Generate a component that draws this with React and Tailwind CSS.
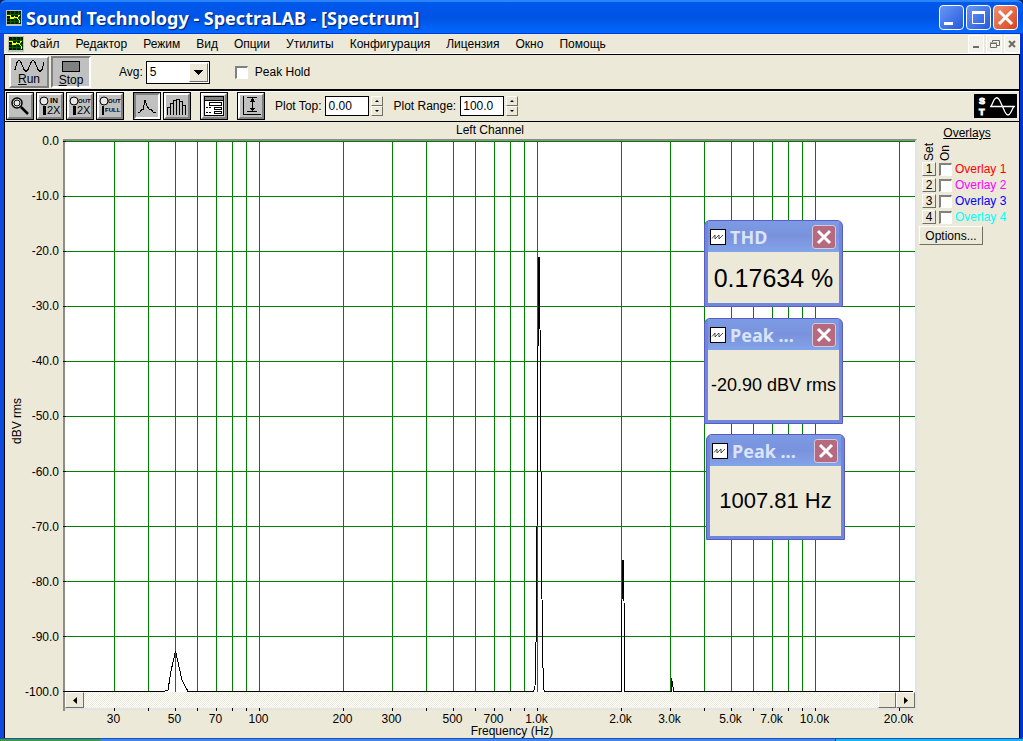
import { useState } from 'react'

const MENU = ['Файл', 'Редактор', 'Режим', 'Вид', 'Опции', 'Утилиты', 'Конфигурация', 'Лицензия', 'Окно', 'Помощь']

const OVERLAYS = [
    { id: 1, color: 'text-[#ff0000]' },
    { id: 2, color: 'text-[#ff00ff]' },
    { id: 3, color: 'text-[#0000ff]' },
    { id: 4, color: 'text-[#00ffff]' },
]

// Plot area units: 850 wide, 551 high, 278 per decade
const PLOT_W = 850
const PLOT_H = 551
const freqX = (hz) => Math.round(194 + 278 * Math.log10(hz / 100)) + 0.5

const FREQS = [
    30, 40, 50, 60, 70, 80, 90, 100, 200, 300, 400, 500, 600, 700, 800, 900,
    1000, 2000, 3000, 4000, 5000, 6000, 7000, 8000, 9000, 10000, 20000,
]
const FREQ_LABELS = [
    [30, '30'], [50, '50'], [70, '70'], [100, '100'], [200, '200'], [300, '300'], [500, '500'], [700, '700'],
    [1000, '1.0k'], [2000, '2.0k'], [3000, '3.0k'], [5000, '5.0k'], [7000, '7.0k'], [10000, '10.0k'], [20000, '20.0k'],
]
const LEVELS = [0, -10, -20, -30, -40, -50, -60, -70, -80, -90, -100]

const SPECTRUM =
    'M0 550.5H99L103 549L106 530L110.5 510L117 539L123 550.5H468.5L470 545L471.5 480L473.5 116L474.5 116L476.5 400L477.5 515L479 549L480 550.5' +
    'H556.5V500L557.5 419H558.5L559.5 500V550.5H606.5V537L608.5 549L609 550.5H848'

const raised = 'border border-t-white border-l-white border-r-[#716f64] border-b-[#716f64] bg-[#ece9d8]'

function AppIcon() {
    return (
        <svg viewBox="0 0 16 16" className="h-4 w-4 shrink-0" shapeRendering="crispEdges" aria-hidden="true">
            <rect width="16" height="16" fill="#c0c0c0" />
            <rect x="1" y="1" width="14" height="13" fill="#001800" />
            <path d="M1 4.5H15M1 8.5H15M1 11.5H15M4.5 1V14M8.5 1V14M12.5 1V14" stroke="#006000" fill="none" />
            <path d="M1 5.5H4L5 8.5L6 7L7 9L8.5 6M8 7.5H11L13 10L14 13M11 8L13.5 5" stroke="#ffff00" fill="none" />
        </svg>
    )
}

function CaptionButton({ label, className, children }) {
    return (
        <button aria-label={label} className={`h-[25px] w-[25px] rounded-[4px] border border-white ${className}`}>
            <svg viewBox="0 0 23 23" className="h-full w-full" fill="none" stroke="white">{children}</svg>
        </button>
    )
}

function TitleBar() {
    return (
        <header className="flex h-[34px] items-center rounded-t-[6px] bg-linear-to-b from-[#0058ee] via-[#0054e3] to-[#0068ff] border-t-2 border-t-[#2a86f8] border-b border-b-[#003dd7] pl-[6px] pr-[5px]">
            <AppIcon />
            <h1 className="ml-1 flex-1 whitespace-nowrap font-['Noto_Sans',sans-serif] text-[18px] font-bold text-white [text-shadow:1px_1px_1px_#001e78]">
                Sound Technology - SpectraLAB - [Spectrum]
            </h1>
            <div className="flex gap-[2px]">
                <CaptionButton label="Minimize" className="bg-linear-to-br from-[#6a96f5] to-[#2258dd]">
                    <path d="M4 17.5H13" strokeWidth="3" />
                </CaptionButton>
                <CaptionButton label="Maximize" className="bg-linear-to-br from-[#6a96f5] to-[#2258dd]">
                    <path d="M5.5 5.5H17.5V17.5H5.5Z" />
                    <path d="M5 6.5H18" strokeWidth="3" />
                </CaptionButton>
                <CaptionButton label="Close" className="bg-linear-to-br from-[#f0906f] to-[#d6401a]">
                    <path d="M5 5L18 18M18 5L5 18" strokeWidth="3" />
                </CaptionButton>
            </div>
        </header>
    )
}

function MenuBar() {
    return (
        <nav className="flex h-5 items-center border-b border-white pl-1">
            <AppIcon />
            <div className="ml-[6px] flex flex-1 gap-4">
                {MENU.map((item) => (
                    <button key={item} className="whitespace-nowrap">{item}</button>
                ))}
            </div>
            <div className="flex gap-[2px]">
                {[
                    ['Minimize document', 'M4 11H10', 2],
                    ['Restore document', 'M3.5 7.5H9.5V11.5H3.5ZM3 7H10M5.5 6V4.5H12.5V9.5H10', 1],
                    ['Close document', 'M4 5L10 11M10 5L4 11', 2],
                ].map(([label, d, w]) => (
                    <button key={label} aria-label={label} className="h-[18px] w-4 border border-white bg-[#f3f2ea]">
                        <svg viewBox="0 0 14 16" className="h-full w-full" fill="none" stroke="#6d6b5f" strokeWidth={w}>
                            <path d={d} />
                        </svg>
                    </button>
                ))}
            </div>
        </nav>
    )
}

function TransportBar() {
    return (
        <div className="flex h-[35px] items-center border-t border-black pl-1">
            <div className="flex gap-[2px]">
                <button className="flex h-8 w-10 flex-col items-center border-2 border-t-white border-l-white border-r-[#808080] border-b-[#808080] bg-[#c0c0c0] leading-3">
                    <svg viewBox="0 0 32 14" className="h-[15px] w-8" fill="none" stroke="black" shapeRendering="crispEdges" aria-hidden="true">
                        <path d="M1 11.5L2 11L4 4L6 1.5L8 4L11 11L13 13L15 11L18 4L20 1.5L22 4L25 11L27 13L29 11L31 4" />
                    </svg>
                    <span><u>R</u>un</span>
                </button>
                <button className="flex h-8 w-10 flex-col items-center border-2 border-t-[#808080] border-l-[#808080] border-r-white border-b-white bg-[#c0c0c0] pt-[3px] leading-3">
                    <span className="mb-[2px] h-[11px] w-[18px] shrink-0 border border-black bg-[#808080]" />
                    <span><u>S</u>top</span>
                </button>
            </div>
            <label htmlFor="avg" className="ml-[28px]">Avg:</label>
            <div className="relative ml-[3px] h-[23px] w-16">
                <select id="avg" defaultValue="5" className="h-full w-full appearance-none rounded-none border border-black bg-white pl-[3px]">
                    <option>1</option>
                    <option>5</option>
                    <option>10</option>
                </select>
                <span className={`pointer-events-none absolute right-[2px] top-[2px] flex h-[19px] w-[19px] items-center justify-center ${raised}`}>
                    <svg viewBox="0 0 9 5" className="h-[5px] w-[9px]" shapeRendering="crispEdges" aria-hidden="true"><path d="M0 0H9L4.500 5Z" /></svg>
                </span>
            </div>
            <label className="ml-[25px] flex items-center gap-[7px]">
                <Check />
                Peak Hold
            </label>
        </div>
    )
}

function Check(props) {
    return (
        <input
            type="checkbox"
            className="h-[13px] w-[13px] appearance-none border-t-2 border-l-2 border-t-[#808080] border-l-[#808080] border-r border-b border-r-white border-b-white bg-white checked:bg-[#404040]"
            {...props}
        />
    )
}

function Tool({ label, pressed, className = '', children }) {
    const edge = pressed
        ? 'border-t-[#808080] border-l-[#808080] border-r-white border-b-white'
        : 'border-t-white border-l-white border-r-[#808080] border-b-[#808080]'
    return (
        <button aria-label={label} aria-pressed={pressed} className={`h-7 w-7 border border-black ${className}`}>
            <span className={`block h-full w-full border-2 bg-[#c0c0c0] ${edge}`}>
                <svg viewBox="0 0 22 22" className="h-full w-full" fill="none" stroke="black" shapeRendering="crispEdges">
                    {children}
                </svg>
            </span>
        </button>
    )
}

function ZoomGlyph({ top, bottom, small }) {
    return (
        <>
            <circle cx="5" cy="6" r="4" fill="#e8e8e8" shapeRendering="auto" />
            <path d={small ? 'M4 11V20' : 'M5.5 11V20'} strokeWidth={small ? 2 : 3} />
            <text x={top.length > 2 ? 9 : 11} y="8" fontSize={top.length > 2 ? 6 : 8} fontWeight="bold" fill="black" stroke="none">{top}</text>
            <text x={small ? 6 : 8} y={small ? 17 : 19} fontSize={small ? 6 : 11} fontWeight={small ? 'bold' : 'normal'} fill="black" stroke="none">{bottom}</text>
        </>
    )
}

function Spinner({ id, label, value, className }) {
    return (
        <div className={`flex items-center ${className}`}>
            <label htmlFor={id} className="whitespace-nowrap">{label}</label>
            <input id={id} defaultValue={value} className="ml-1 h-5 w-11 border border-black bg-white px-[2px]" />
            <div className="ml-[2px] flex flex-col">
                <button aria-label={`${label} up`} className={`flex h-[10px] w-3 items-center justify-center ${raised}`}>
                    <svg viewBox="0 0 4 2" className="h-[2px] w-1"><path d="M0 2H4L2 0Z" /></svg>
                </button>
                <button aria-label={`${label} down`} className={`flex h-[10px] w-3 items-center justify-center ${raised}`}>
                    <svg viewBox="0 0 4 2" className="h-[2px] w-1"><path d="M0 0H4L2 2Z" /></svg>
                </button>
            </div>
        </div>
    )
}

function ViewBar() {
    return (
        <div className="flex h-[33px] items-center border-t-2 border-b border-black pl-[1px] pr-[2px] shadow-[inset_0_1px_0_white]">
            <div className="flex gap-[2px]">
                <Tool label="Zoom">
                    <circle cx="8" cy="8" r="5" fill="#e8e8e8" strokeWidth="1.500" shapeRendering="auto" />
                    <circle cx="8" cy="8" r="3" shapeRendering="auto" />
                    <path d="M12 12L19 19" strokeWidth="2.500" shapeRendering="auto" />
                </Tool>
                <Tool label="Zoom in 2X"><ZoomGlyph top="IN" bottom="2X" /></Tool>
                <Tool label="Zoom out 2X"><ZoomGlyph top="OUT" bottom="2X" /></Tool>
                <Tool label="Zoom out full"><ZoomGlyph top="OUT" bottom="FULL" small /></Tool>
                <Tool label="Line plot" pressed className="ml-[7px]">
                    <path d="M2 18L4 17L6 14L7 15L9 5L11 11L13 14L15 14L17 17L20 18" />
                </Tool>
                <Tool label="Bar plot">
                    <path d="M1.500 20V12.500H4.500V8.500H7.500V5.500H10.500V4.500H13.500V6.500H16.500V10.500H19.500V20M4.500 12V20M7.500 8V20M10.500 5V20M13.500 6V20M16.500 10V20" />
                </Tool>
                <Tool label="Settings" className="ml-[7px]">
                    <rect x="1.500" y="1.500" width="19" height="19" fill="white" />
                    <rect x="2" y="2" width="18" height="3" fill="#808080" stroke="none" />
                    <path d="M2 5.500H20M6.500 7.500H18.500V10.500H6.500ZM11.500 12.500H18.500V14.500H11.500ZM11.500 16.500H18.500V18.500H11.500Z" />
                    <path d="M3 12.500H9M3 17.500H9" strokeDasharray="2 1" />
                </Tool>
                <Tool label="Vertical scale" className="ml-[7px]">
                    <path d="M3.500 1V19.500H21M7 2.500H17M7 16.500H17M12.500 3V16M10 6.500H15M11 5.500H14M11 4.500H14M10 13.500H15M11 14.500H14" />
                </Tool>
            </div>
            <Spinner id="plot-top" label="Plot Top:" value="0.00" className="ml-[10px]" />
            <Spinner id="plot-range" label="Plot Range:" value="100.0" className="ml-[10px]" />
            <svg viewBox="0 0 43 24" className="ml-auto h-6 w-[43px]" aria-label="Sound Technology">
                <rect width="43" height="24" />
                <text x="5" y="10" fontSize="9" fontWeight="bold" fill="white" stroke="white">S</text>
                <text x="5" y="21" fontSize="9" fontWeight="bold" fill="white" stroke="white">T</text>
                <path d="M16 12.500H41M17 12.500L20 6Q23 1 26 7L31 18Q34 24 37 18L40 12" stroke="white" strokeWidth="1.300" fill="none" />
            </svg>
        </div>
    )
}

function Meter({ title, place, textSize, height, children }) {
    return (
        <section className={`absolute w-[139px] rounded-t-[6px] bg-[#7088dc] border border-[#5a5cc4] px-[3px] pb-[3px] ${place}`}>
            <div className="flex h-[31px] items-center bg-linear-to-b from-[#7c9be4] via-[#7a92dd] to-[#82a4e8] pl-[2px] pr-[3px]">
                <svg viewBox="0 0 16 16" className="h-4 w-4 shrink-0" aria-hidden="true">
                    <rect x="0.500" y="0.500" width="15" height="15" fill="white" stroke="black" />
                    <path d="M2 9.500L5 6V10L9 6V10L13 6" stroke="#222" strokeWidth="0.800" fill="none" />
                </svg>
                <h2 className="ml-1 flex-1 whitespace-nowrap font-['Noto_Sans',sans-serif] text-[18px] font-bold text-[#d8e4f8]">{title}</h2>
                <button aria-label={`Close ${title}`} className="h-6 w-6 rounded-[3px] border border-[#d8c8dc] bg-[#b56a80]">
                    <svg viewBox="0 0 22 22" className="h-full w-full" stroke="white" strokeWidth="3">
                        <path d="M5 5L17 17M17 5L5 17" />
                    </svg>
                </button>
            </div>
            <output className={`flex items-center justify-center whitespace-nowrap bg-[#ece9d8] ${textSize} ${height}`}>
                {children}
            </output>
        </section>
    )
}

function ScrollButton({ label, d }) {
    return (
        <button aria-label={label} className={`flex h-4 w-[19px] items-center justify-center ${raised}`}>
            <svg viewBox="0 0 4 7" className="h-[7px] w-1"><path d={d} /></svg>
        </button>
    )
}

function Plot() {
    return (
        <div className="flex min-w-0 flex-1 flex-col">
            <h2 className="h-[17px] text-center leading-[17px]">Left Channel</h2>
            <div className="flex flex-1 flex-col border-t-2 border-l-2 border-r-2 border-t-[#8c8c88] border-l-[#8c8c88] border-r-[#e3e3e3]">
                <div className="relative min-h-[420px] flex-1 bg-white">
                    <svg
                        viewBox={`0 0 ${PLOT_W} ${PLOT_H}`}
                        preserveAspectRatio="none"
                        className="absolute inset-0 h-full w-full overflow-visible"
                        fill="none"
                        shapeRendering="crispEdges"
                        role="img"
                        aria-label="Spectrum, left channel"
                    >
                        {FREQS.map((f) => (
                            <path key={f} d={`M${freqX(f)} 0V${PLOT_H}`} stroke="#008000" />
                        ))}
                        {LEVELS.slice(0, -1).map((db) => (
                            <path key={db} d={`M0 ${-db * 5.5 + 0.5}H${PLOT_W}`} stroke="#008000" />
                        ))}
                        {LEVELS.map((db) => (
                            <path key={db} d={`M-2 ${-db * 5.5 + 0.5}H1`} stroke="black" />
                        ))}
                        <path d={SPECTRUM} stroke="black" />
                    </svg>
                    <Meter title="THD" place="right-[72px] top-[79px]" textSize="text-[25px]" height="h-[51px]">0.17634 %</Meter>
                    <Meter title="Peak ..." place="right-[72px] top-[177px]" textSize="text-[18px]" height="h-[70px]">-20.90 dBV rms</Meter>
                    <Meter title="Peak ..." place="right-[70px] top-[293px]" textSize="text-[22px]" height="h-[70px]">1007.81 Hz</Meter>
                </div>
                <div className="flex h-4 bg-[repeating-conic-gradient(#ece9d8_0_25%,#ffffff_0_50%)] bg-size-[2px_2px]">
                    <ScrollButton label="Scroll left" d="M4 0V7L0 3.500Z" />
                    <div className={`ml-auto w-[18px] ${raised}`} />
                    <ScrollButton label="Scroll right" d="M0 0V7L4 3.500Z" />
                </div>
                <svg viewBox={`0 0 ${PLOT_W} 3`} preserveAspectRatio="none" className="h-[3px] w-full" shapeRendering="crispEdges" aria-hidden="true">
                    <rect width={PLOT_W} height="2" fill="#e3e3e3" />
                    {FREQS.map((f) => (
                        <path key={f} d={`M${freqX(f)} 0V3`} stroke="black" />
                    ))}
                </svg>
            </div>
            <div className="relative mr-[3px] ml-[1px] h-[15px] leading-[16px]">
                {FREQ_LABELS.map(([f, text]) => (
                    <span key={f} className="absolute -translate-x-1/2" style={{ left: `${(freqX(f) / PLOT_W) * 100}%` }}>
                        {text}
                    </span>
                ))}
            </div>
            <p className="h-[12px] pl-11 text-center leading-[11px]">Frequency (Hz)</p>
        </div>
    )
}

function LevelAxis() {
    return (
        <div className="flex w-[58px] shrink-0 items-stretch">
            <div className="flex w-[22px] items-center justify-end pb-[18px]">
                <span className="rotate-180 whitespace-nowrap [writing-mode:vertical-rl]">dBV rms</span>
            </div>
            <div className="flex flex-1 flex-col items-end justify-between pt-[13px] pb-10 pr-1 leading-3">
                {LEVELS.map((db) => (
                    <span key={db}>{db.toFixed(1)}</span>
                ))}
            </div>
        </div>
    )
}

function OverlayPanel() {
    const [on, setOn] = useState([])
    const toggle = (id) => setOn(on.includes(id) ? on.filter((x) => x !== id) : [...on, id])

    return (
        <aside className="w-[102px] shrink-0 pl-[2px] pt-[3px]">
            <h2 className="pr-1 text-center leading-4 underline">Overlays</h2>
            <div className="flex h-5 items-end gap-[2px] pl-[3px] leading-[14px]">
                <span className="rotate-180 [writing-mode:vertical-rl]">Set</span>
                <span className="rotate-180 [writing-mode:vertical-rl]">On</span>
            </div>
            <ul className="pl-[3px]">
                {OVERLAYS.map(({ id, color }) => (
                    <li key={id} className="flex h-4 items-center">
                        <button className={`h-[14px] w-[14px] leading-3 ${raised}`}>{id}</button>
                        <label className={`ml-[3px] flex items-center gap-[3px] whitespace-nowrap ${color}`}>
                            <Check checked={on.includes(id)} onChange={() => toggle(id)} />
                            Overlay {id}
                        </label>
                    </li>
                ))}
            </ul>
            <button className={`mt-[1px] h-[19px] w-16 leading-4 ${raised}`}>Options...</button>
        </aside>
    )
}

export default function App() {
    return (
        <div className="flex min-h-screen flex-col bg-[#0a246a] font-['Liberation_Sans',Arial,sans-serif] text-[12px] leading-4 text-black">
            <TitleBar />
            <div className="flex flex-1 flex-col border-l-4 border-r-[3px] border-l-[#0c4ae0] border-r-[#0034d0] bg-[#ece9d8]">
                <MenuBar />
                <main className="flex flex-1 flex-col border-l border-r border-black">
                    <TransportBar />
                    <ViewBar />
                    <div className="flex flex-1">
                        <LevelAxis />
                        <Plot />
                        <OverlayPanel />
                    </div>
                </main>
            </div>
            <footer className="flex h-[3px] border-t border-[#1c50b8] bg-[#3c88f0]">
                <div className="w-[101px] rounded-tr bg-[#3c9c3c]" />
                <div className="ml-auto w-[188px] border-l border-[#0a3c70] bg-[#18b4f4]" />
            </footer>
        </div>
    )
}
